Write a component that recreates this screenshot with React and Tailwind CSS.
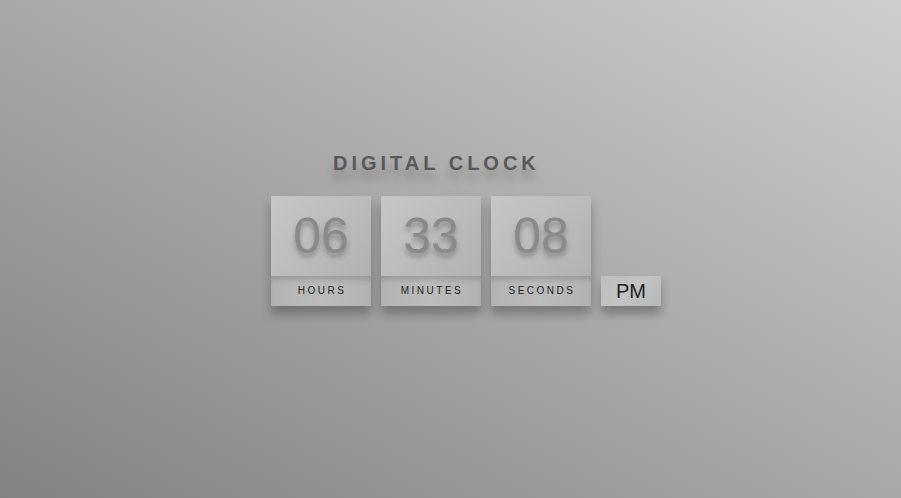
export default function App() {
  const font = { fontFamily: '"Liberation Sans", Arial, sans-serif' };
  const units = [
    { v: "06", l: "HOURS" },
    { v: "33", l: "MINUTES" },
    { v: "08", l: "SECONDS" },
  ];
  return (
    <div
      className="w-full h-[498px] overflow-hidden bg-[linear-gradient(to_top_right,#828284,#cecece)] flex flex-col pt-[151px] pl-[271px]"
      style={font}
    >
      <div className="pl-[62px] text-[20px] leading-[24px] font-bold tracking-[4px] text-[#5a5757] [text-shadow:0_10px_8px_rgba(0,0,0,0.22)]">
        DIGITAL CLOCK
      </div>
      <div className="flex items-end gap-[10px] mt-[21px]">
        {units.map((u) => (
          <div
            key={u.l}
            className="w-[100px] h-[110px] flex flex-col shadow-[0_8px_10px_rgba(0,0,0,0.28)]"
          >
            <div className="h-[80px] flex items-center justify-center text-[50px] leading-[80px] text-[#8a8a8a] bg-[linear-gradient(135deg,#c6c6c6,#bcbcbc_50%,#b1b1b1)] [text-shadow:0_4px_5px_rgba(0,0,0,0.28)]">
              {u.v}
            </div>
            <div className="h-[30px] flex items-center justify-center text-[10px] leading-[12px] tracking-[2.5px] pl-[2px] pb-[1px] text-[#222] bg-[linear-gradient(90deg,#b3b3b3,#bbbbbb_50%,#b2b2b2)] shadow-[inset_0_6px_6px_-3px_rgba(0,0,0,0.18)]">
              {u.l}
            </div>
          </div>
        ))}
        <div className="w-[60px] h-[30px] flex items-center justify-center text-[20px] text-[#222] bg-[linear-gradient(135deg,#bdbdbd,#c4c4c4_50%,#b6b6b6)] shadow-[0_8px_10px_rgba(0,0,0,0.28)]">
          PM
        </div>
      </div>
    </div>
  );
}
